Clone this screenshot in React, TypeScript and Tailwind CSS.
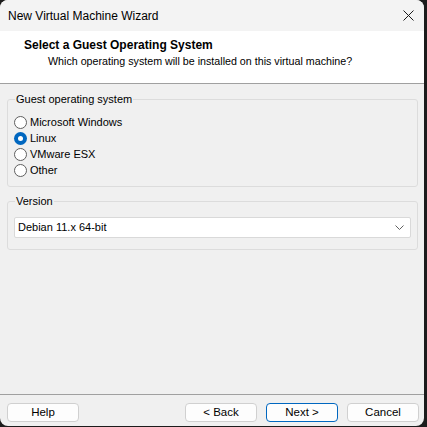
import React from "react"

const font = { fontFamily: '"Liberation Sans", Arial, sans-serif' }

function Radio({ label, checked }: { label: string; checked?: boolean }) {
  return (
    <div className="flex h-[16px] items-center gap-[3px]">
      {checked ? (
        <span className="flex h-[13px] w-[13px] items-center justify-center rounded-full bg-[#0067c0]">
          <span className="h-[5px] w-[5px] rounded-full bg-white" />
        </span>
      ) : (
        <span className="h-[13px] w-[13px] rounded-full border border-[#5f5f5f] bg-white" />
      )}
      <span>{label}</span>
    </div>
  )
}

function Btn({ label, primary }: { label: string; primary?: boolean }) {
  return (
    <button
      className={
        "h-[19px] w-[72px] rounded-[4px] border bg-[#fdfdfd] text-[11.5px] leading-none text-black " +
        (primary ? "border-[#0067c0]" : "border-[#d0d0d0]")
      }
    >
      {label}
    </button>
  )
}

export default function App() {
  return (
    <div className="h-[427px] w-[427px] bg-[#1c1c1c]" style={font}>
      <div className="flex h-[426px] w-[424px] flex-col overflow-hidden rounded-[8px] bg-[#f0f0f0] text-[11px] text-black">
        {/* title bar */}
        <div className="flex h-[31px] items-center justify-between bg-[#f3f3f3] pl-[8px] pr-[10px]">
          <span className="text-[12px]">New Virtual Machine Wizard</span>
          <svg width="11" height="11" viewBox="0 0 11 11">
            <path d="M0.5 0.5 L10.5 10.5 M10.5 0.5 L0.5 10.5" stroke="#1a1a1a" strokeWidth="1" />
          </svg>
        </div>

        {/* header */}
        <div className="h-[53px] border-b border-[#a0a0a0] bg-white pt-[7px]">
          <div className="pl-[24px] text-[12px] font-bold leading-[15px]">Select a Guest Operating System</div>
          <div className="pl-[48px] text-[10.7px] leading-[16px]">
            Which operating system will be installed on this virtual machine?
          </div>
        </div>

        {/* body */}
        <div className="flex flex-1 flex-col gap-[6px] px-[7px] pt-[7px]">
          <fieldset className="h-[96px] w-[411px] rounded-[3px] border border-[#dcdcdc] pl-[6px] pt-[7px]">
            <legend className="ml-[1px] px-[1px] leading-[16px]">Guest operating system</legend>
            <Radio label="Microsoft Windows" />
            <Radio label="Linux" checked />
            <Radio label="VMware ESX" />
            <Radio label="Other" />
          </fieldset>

          <fieldset className="h-[57px] w-[411px] rounded-[3px] border border-[#dcdcdc] px-[6px] pt-[8px]">
            <legend className="ml-[1px] px-[1px] leading-[16px]">Version</legend>
            <div className="flex h-[21px] w-[397px] items-center justify-between rounded-[2px] border border-[#d9d9d9] bg-white pl-[3px] pr-[6px]">
              <span>Debian 11.x 64-bit</span>
              <svg width="9" height="5" viewBox="0 0 9 5">
                <path d="M0.5 0.5 L4.5 4.5 L8.5 0.5" stroke="#606060" fill="none" strokeWidth="1" />
              </svg>
            </div>
          </fieldset>
        </div>

        {/* footer */}
        <div className="flex h-[32px] items-start border-t border-[#a0a0a0] pl-[7px] pr-[5px] pt-[8px]">
          <Btn label="Help" />
          <div className="ml-auto flex gap-[9px]">
            <Btn label="< Back" />
            <Btn label="Next >" primary />
            <Btn label="Cancel" />
          </div>
        </div>
      </div>
    </div>
  )
}
